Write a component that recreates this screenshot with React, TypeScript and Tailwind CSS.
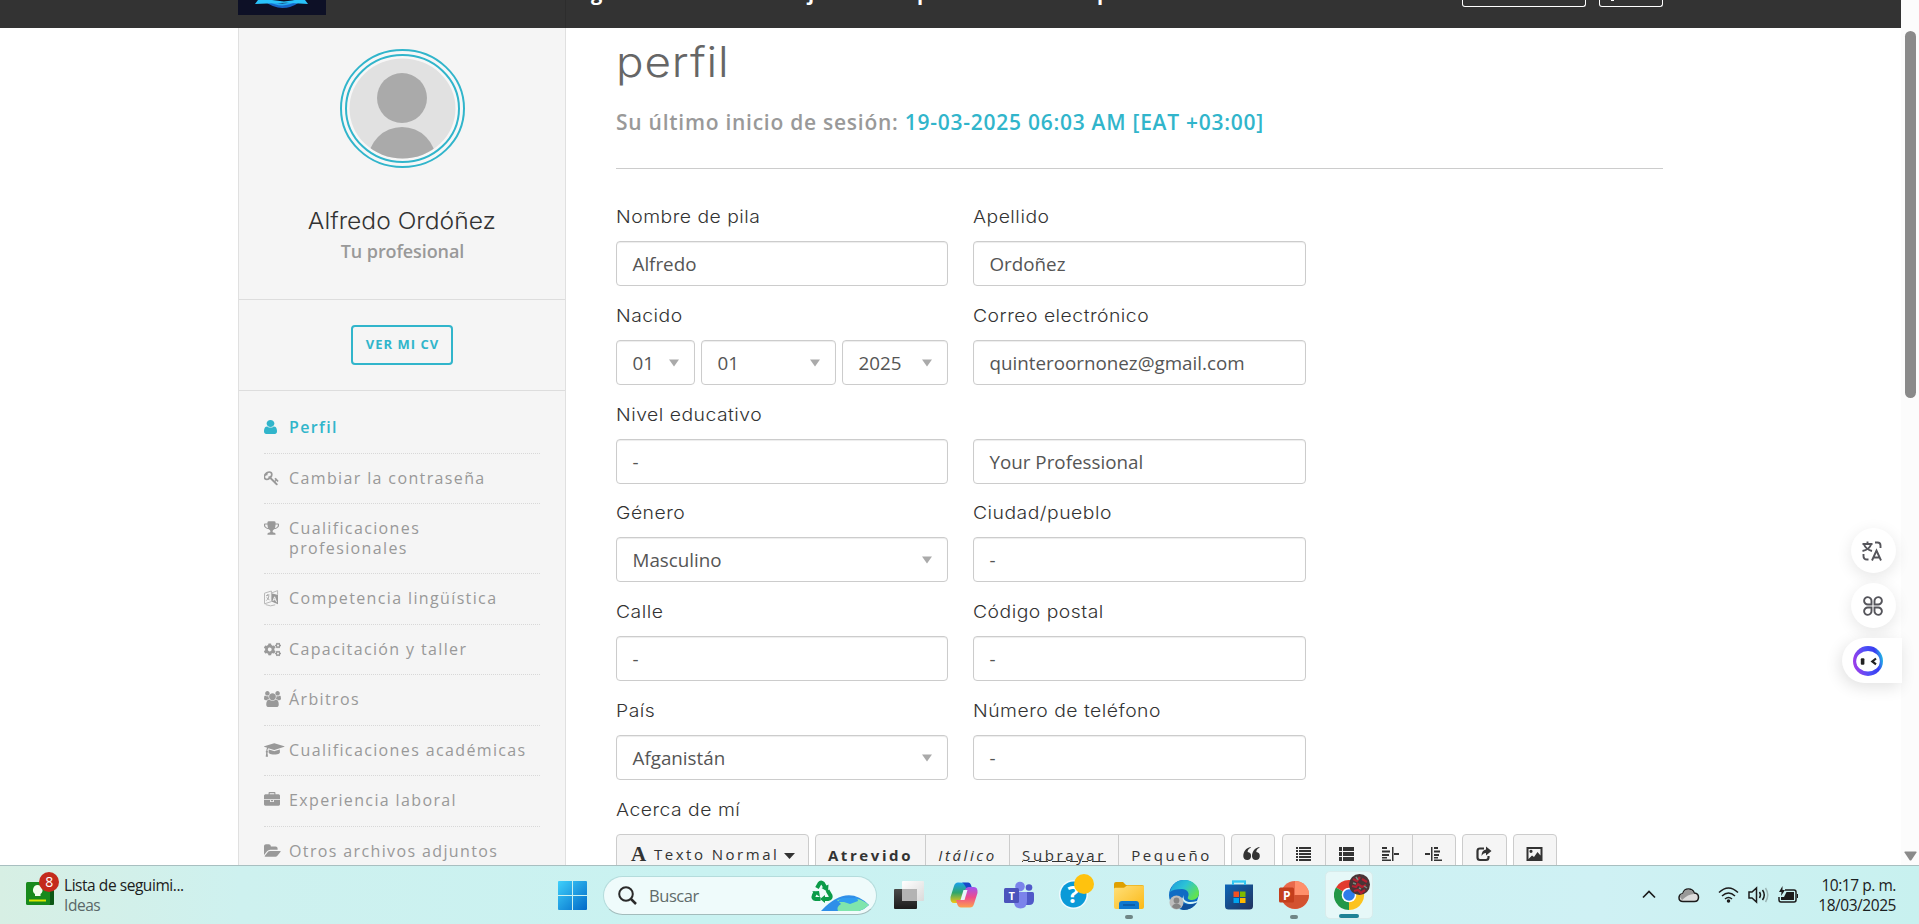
import React from "react";
import { FaCogs } from "react-icons/fa";

type Glyph = { box: string; w: number; h?: number; d: string };

const glyphs: Record<string, Glyph> = {
  user: {
    box: "256 128 1280 1536",
    w: 13,
    h: 14,
    d: "M1536 1399q0 109-62.5 187t-150.5 78h-854q-88 0-150.5-78t-62.5-187q0-85 8.5-160.5t31.5-152 58.5-131 94-89 134.5-34.5q131 128 313 128t313-128q76 0 134.5 34.5t94 89 58.5 131 31.5 152 8.5 160.5zm-256-887q0 159-112.5 271.5t-271.5 112.5-271.5-112.5-112.5-271.5 112.5-271.5 271.5-112.5 271.5 112.5 112.5 271.5z",
  },
  key: {
    box: "64 0 1664 1792",
    w: 15,
    d: "M832 512q0-80-56-136t-136-56-136 56-56 136q0 42 19 83-41-19-83-19-80 0-136 56t-56 136 56 136 136 56 136-56 56-136q0-42-19-83 41 19 83 19 80 0 136-56t56-136zm851 704q0 17-49 66t-66 49q-9 0-28.5-16t-36.5-33-38.5-40-24.5-26l-96 96 220 220q28 28 28 68 0 42-39 81t-81 39q-40 0-68-28l-671-671q-176 131-365 131-163 0-265.5-102.5t-102.5-265.5q0-160 95-313t248-248 313-95q163 0 265.5 102.5t102.5 265.5q0 189-131 365l355 355 96-96q-3-3-26-24.5t-40-38.5-33-36.5-16-28.5q0-17 49-66t66-49q13 0 23 10 6 6 46 44.5t82 79.5 86.5 86 73 78 28.5 41z",
  },
  trophy: {
    box: "64 0 1664 1792",
    w: 15,
    d: "M522 883q-74-162-74-371h-256v96q0 78 94.5 162t235.5 113zm1078-275v-96h-256q0 209-74 371 141-29 235.5-113t94.5-162zm128-128v128q0 71-41.5 143t-112 130-173 97.5-215.5 44.5q-42 54-95 95-38 34-52.5 72.5t-14.5 89.5q0 54 30.5 91t97.5 37q75 0 133.5 45.5t58.5 114.5v64q0 14-9 23t-23 9h-832q-14 0-23-9t-9-23v-64q0-69 58.5-114.5t133.5-45.5q67 0 97.5-37t30.5-91q0-51-14.5-89.5t-52.5-72.5q-53-41-95-95-113-5-215.5-44.5t-173-97.5-112-130-41.5-143v-128q0-40 28-68t68-28h288v-96q0-66 47-113t113-47h576q66 0 113 47t47 113v96h288q40 0 68 28t28 68z",
  },
  users: {
    box: "0 0 1920 1792",
    w: 17,
    d: "M593 896q-162 5-265 128h-134q-82 0-138-40.5t-56-118.5q0-353 124-353 6 0 43.5 21t97.5 42.5 119 21.5q67 0 133-23-5 37-5 66 0 139 81 256zm1071 637q0 120-73 189.5t-194 69.5h-874q-121 0-194-69.5t-73-189.5q0-53 3.5-103.5t14-109 26.5-108.5 43-97.5 62-81 85.5-53.5 111.5-20q10 0 43 21.5t73 48 107 48 135 21.5 135-21.5 107-48 73-48 43-21.5q61 0 111.5 20t85.5 53.5 62 81 43 97.5 26.5 108.5 14 109 3.5 103.5zm-1024-1277q0 106-75 181t-181 75-181-75-75-181 75-181 181-75 181 75 75 181zm704 384q0 159-112.5 271.5t-271.5 112.5-271.5-112.5-112.5-271.5 112.5-271.5 271.5-112.5 271.5 112.5 112.5 271.5zm576 225q0 78-56 118.5t-138 40.5h-134q-103-123-265-128 81-117 81-256 0-29-5-66 66 23 133 23 59 0 119-21.5t97.5-42.5 43.5-21q124 0 124 353zm-128-609q0 106-75 181t-181 75-181-75-75-181 75-181 181-75 181 75 75 181z",
  },
  cap: {
    box: "0 0 2304 1792",
    w: 20.5,
    d: "M1774 836l18 316q4 69-82 128t-235 93.5-323 34.5-323-34.5-235-93.5-82-128l18-316 574 181q22 7 48 7t48-7zm530-324q0 23-22 31l-1120 352q-4 1-10 1t-10-1l-652-206q-43 34-71 111.5t-34 178.5q63 36 63 109 0 69-58 107l58 433q2 14-8 25-9 11-24 11h-192q-15 0-24-11-10-11-8-25l58-433q-58-38-58-107 0-73 65-111 11-207 98-330l-333-104q-22-8-22-31t22-31l1120-352q4-1 10-1t10 1l1120 352q22 8 22 31z",
  },
  briefcase: {
    box: "0 0 1792 1792",
    w: 16,
    d: "M640 256h512v-128h-512v128zm1152 640v480q0 66-47 113t-113 47h-1472q-66 0-113-47t-47-113v-480h672v160q0 26 19 45t45 19h320q26 0 45-19t19-45v-160h672zm-768 0v128h-256v-128h256zm768-480v384h-1792v-384q0-66 47-113t113-47h352v-160q0-40 28-68t68-28h576q40 0 68 28t28 68v160h352q66 0 113 47t47 113z",
  },
  folder: {
    box: "0 0 1920 1792",
    w: 17,
    d: "M1879 952q0 31-31 66l-336 396q-43 51-120.5 86.5t-143.5 35.5h-1088q-34 0-60.5-13t-26.5-43q0-31 31-66l336-396q43-51 120.5-86.5t143.5-35.5h1088q34 0 60.5 13t26.5 43zm-343-344v160h-832q-94 0-197 47.5t-164 119.5l-337 396-5 6q0-4-.5-12.5t-.5-12.5v-960q0-92 66-158t158-66h320q92 0 158 66t66 158v32h544q92 0 158 66t66 158z",
  },
};

function MenuIcon({ name }: { name: string }) {
  if (name === "cogs") return <FaCogs size={17} />;
  if (name === "language")
    return (
      <svg width="15" height="17" viewBox="0 0 15 17" fill="none">
        <path d="M7.4 3.2 14 5v9.2L7.4 11.4z" fill="currentColor" />
        <path d="M.5 3.2 7.4 1v10.6L.5 13.8zM7.4 3 13.6.6v4.2M1.6 14.6q5 2.4 9.6.2" stroke="#b9b9b9" />
        <path d="M2 5.8l3.4-1M3.8 4v1.4M2.3 10.6c1.6-1.3 2.4-3 2.6-5M2.8 7.4c.8 1.3 1.5 2 2.7 2.4" stroke="currentColor" strokeWidth=".8" />
        <path d="M9 11 10.6 6.8 12.6 12.2M9.6 9.4l2.4.8" stroke="#f5f5f5" strokeWidth=".9" />
      </svg>
    );
  const g = glyphs[name];
  return (
    <svg width={g.w} height={g.h ?? 16} viewBox={g.box} preserveAspectRatio="none" fill="currentColor">
      <path d={g.d} />
    </svg>
  );
}

const menu = [
  { icon: "user", label: "Perfil", row: "h-[51px] text-[#31b5cb] font-semibold" },
  { icon: "key", label: "Cambiar la contraseña", row: "h-[50px]" },
  { icon: "trophy", label: "Cualificaciones profesionales", row: "h-[70px]" },
  { icon: "language", label: "Competencia lingüística", row: "h-[51px]" },
  { icon: "cogs", label: "Capacitación y taller", row: "h-[50px]" },
  { icon: "users", label: "Árbitros", row: "h-[51px]" },
  { icon: "cap", label: "Cualificaciones académicas", row: "h-[50px]" },
  { icon: "briefcase", label: "Experiencia laboral", row: "h-[51px]" },
  { icon: "folder", label: "Otros archivos adjuntos", row: "h-[51px]" },
];

function Header() {
  return (
    <header className="relative flex h-7 w-[1902px] shrink-0 overflow-hidden bg-[#333] pl-[238px]">
      <svg width="88" height="15" viewBox="0 0 88 15" className="shrink-0">
        <rect width="88" height="15" fill="#0d1026" />
        <path d="M28 0q16 12 33 0" fill="none" stroke="#1767c9" strokeWidth="4" />
        <path d="M30 0q14 9 29 0" fill="none" stroke="#25a8f2" strokeWidth="2" />
        <path d="M20 0H34L46 1.5 58 0H67L70 4 48 2.8 17 4z" fill="#29c3fb" />
      </svg>
      <div className="relative ml-[239px] w-px bg-[#2d2d2d]">
        <span className="absolute left-[26px] -top-[17px] text-[20px] leading-5 font-bold text-white">g</span>
        <span className="absolute left-[243px] -top-[17px] text-[20px] leading-5 font-bold text-white">j</span>
        <span className="absolute left-[352px] -top-[17px] text-[20px] leading-5 font-bold text-white">p</span>
        <span className="absolute left-[532px] -top-[17px] text-[20px] leading-5 font-bold text-white">p</span>
      </div>
      <div className="ml-[896px] h-[7px] w-[124px] rounded-b-[3px] border border-t-0 border-white" />
      <div className="ml-[13px] h-[7px] w-[64px] rounded-b-[3px] border border-t-0 border-white pl-[11px]">
        <div className="h-px w-[3px] bg-white" />
      </div>
    </header>
  );
}

function Sidebar() {
  return (
    <aside className="ml-[238px] flex w-[328px] shrink-0 flex-col border-x border-[#e0e0e0] bg-[#f5f5f5]">
      <div className="flex h-[272px] shrink-0 flex-col items-center border-b border-[#ddd] pt-[21px]">
        <svg width="126" height="120" viewBox="-0.5 0 126 120">
          <defs>
            <clipPath id="face">
              <ellipse cx="63" cy="59.5" rx="53" ry="50" />
            </clipPath>
          </defs>
          <ellipse cx="63" cy="59.5" rx="61.5" ry="58.5" fill="#f7f7f7" stroke="#31b5cb" strokeWidth="2" />
          <ellipse cx="63" cy="59.5" rx="56.5" ry="53.5" fill="#f7f7f7" stroke="#31b5cb" strokeWidth="2" />
          <g clipPath="url(#face)">
            <rect width="126" height="120" fill="#e1e1e1" />
            <circle cx="62.500" cy="49" r="25" fill="#aaa" />
            <ellipse cx="62.500" cy="112" rx="34" ry="34" fill="#aaa" />
          </g>
        </svg>
        <h2 className="mt-[36px] scale-x-[1.07] font-[Inter,sans-serif] text-[23px] leading-8 font-light text-[#333]">Alfredo Ordóñez</h2>
        <p className="mt-[2px] ml-px text-[18px] leading-6 font-semibold tracking-[-0.1px] text-[#999]">Tu profesional</p>
      </div>
      <div className="flex h-[91px] shrink-0 items-center justify-center border-b border-[#ddd]">
        <button className="h-10 w-[102px] rounded-[4px] border-2 border-[#31b5cb] pl-px text-[13px] font-bold tracking-[1px] text-[#31b5cb]">VER MI CV</button>
      </div>
      <nav className="shrink-0 px-[25px] pt-3 text-[16px] leading-5 tracking-[1.37px] text-[#999]">
        {menu.map((m) => (
          <a key={m.label} className={`flex border-b border-dotted border-[#d8d8d8] pt-[14px] ${m.row}`}>
            <span className="flex h-5 w-[25px] shrink-0 items-center">
              <MenuIcon name={m.icon} />
            </span>
            <span className="w-[251px] shrink-0">{m.label}</span>
          </a>
        ))}
      </nav>
    </aside>
  );
}

const boxClass =
  "flex h-[45px] items-center justify-between rounded-[4px] border border-[#ccc] bg-white pl-[15.500px] pr-[14px] pt-px text-[18.8px] tracking-normal text-[#555] shadow-[inset_0_1px_1px_rgba(0,0,0,0.075)]";

function Box({ value, select, width = "w-full" }: { value: string; select?: boolean; width?: string }) {
  return (
    <div className={`${boxClass} ${width}`}>
      <span>{value}</span>
      {select && (
        <svg width="12" height="8" viewBox="0 0 12 8">
          <path d="M1 .5h10L6 7.5z" fill="#aaa" />
        </svg>
      )}
    </div>
  );
}

function Field({ label, children }: { label: string; children: React.ReactNode }) {
  return (
    <div className="h-[98.8px]">
      <div className="h-9 font-[Inter,sans-serif] text-[17.5px] leading-6 font-light tracking-[0.45px] text-[#333]">
        <span className="inline-block origin-left scale-x-[1.105]">{label}</span>
      </div>
      {children}
    </div>
  );
}

const cell = "flex items-center justify-center border-r border-[#ccc] last:border-r-0";
const group = "flex h-[46px] rounded-[4px] border border-[#ccc] bg-[#f5f5f5] pb-[5px]";

function ToolIcon({ name }: { name: string }) {
  return (
    <svg width="17" height="16" viewBox="0 0 17 16" fill="#333">
      {name === "quote" && (
        <path d="M7.6 1C3 2 .3 5.500.3 10.200a3.900 3.900 0 1 0 4.300-4.100C4.600 4.200 5.600 2.700 7.800 1.700zM16.300 1C11.700 2 9 5.500 9 10.200a3.900 3.900 0 1 0 4.300-4.100c0-1.900 1-3.400 3.200-4.400z" />
      )}
      {name === "ul" && <path d="M1 1h2v2H1zM4 1h12v2H4zM1 4h2v2H1zM4 4h12v2H4zM1 7h2v2H1zM4 7h12v2H4zM1 10h2v2H1zM4 10h12v2H4zM1 13h2v2H1zM4 13h12v2H4z" />}
      {name === "ol" && <path d="M1 1h3v4H1zM5 1h11v4H5zM1 6h3v4H1zM5 6h11v4H5zM1 11h3v4H1zM5 11h11v4H5z" />}
      {name === "outdent" && <path d="M0 1h5v2H0zM0 4.500h8v2H0zM0 8h7v2H0zM0 11h5v1.500H0zM0 13.500h9V15H0zM10 1h1.500v14H10zM12 7h5v2h-5z" />}
      {name === "indent" && <path d="M6 1h1.500v14H6zM0 7h5v2H0zM9 1h4v2H9zM9 4.500h6v2H9zM9 8h5v2H9zM9 11h4v1.500H9zM9 13.500h8V15H9z" />}
      {name === "share" && (
        <>
          <path d="M9 2.500H5Q2.500 2.500 2.500 5v6.500Q2.500 14 5 14h6q2.500 0 2.500-2.500V10" fill="none" stroke="#333" strokeWidth="2.200" />
          <path d="M11 .5 16.500 5 11 9.500V7Q8 7 6.500 10 6.500 4 11 3.400z" />
        </>
      )}
      {name === "image" && <path fillRule="evenodd" d="M.5 1h16v14H.5zM2.500 3v10l3.500-3.500 2 1.500 3.500-5 3 3.500V3zM5 3.700a1.600 1.600 0 1 1 0 3.200 1.600 1.600 0 0 1 0-3.200z" />}
    </svg>
  );
}

function Toolbar() {
  return (
    <div className="flex text-[15px] tracking-[2.6px] text-[#333]">
      <div className={`${group} w-[193px] items-center pl-[14px]`}>
        <span className="w-[23px] font-['Liberation_Serif',serif] text-[21px] leading-5 font-bold tracking-normal">A</span>
        <span className="-mt-px tracking-[2.500px]">Texto Normal</span>
        <svg width="11" height="6" viewBox="0 0 11 6" className="mt-1 ml-[5px]">
          <path d="M0 0h11L5.500 6z" fill="#333" />
        </svg>
      </div>
      <div className={`${group} ml-[6px] w-[410px] pb-0`}>
        <span className={`${cell} w-[110px] pt-px font-bold`}>Atrevido</span>
        <span className={`${cell} w-[84px] pt-px italic`}>Itálico</span>
        <span className={`${cell} w-[109px] pt-px underline decoration-1 underline-offset-0`}>Subrayar</span>
        <span className={`${cell} flex-1 pt-px`}>Pequeño</span>
      </div>
      <div className={`${group} ml-[6px] w-11`}>
        <span className={`${cell} -ml-1 flex-1`}><ToolIcon name="quote" /></span>
      </div>
      <div className={`${group} ml-[7px] w-[174px]`}>
        {["ul", "ol", "outdent", "indent"].map((n) => (
          <span key={n} className={`${cell} -mb-[5px] flex-1 pr-px pb-[5px]`}><ToolIcon name={n} /></span>
        ))}
      </div>
      <div className={`${group} ml-[6px] w-[45px]`}>
        <span className={`${cell} flex-1 pr-[3px]`}><ToolIcon name="share" /></span>
      </div>
      <div className={`${group} ml-[6px] w-11`}>
        <span className={`${cell} flex-1 pr-[2px]`}><ToolIcon name="image" /></span>
      </div>
    </div>
  );
}

function Profile() {
  return (
    <section className="ml-[50px] w-[1047px] shrink-0">
      <h1 className="mt-[7px] h-[54px] w-[120px] origin-left scale-x-[1.09] font-[Inter,sans-serif] text-[42px] leading-[54px] font-light tracking-[0.8px] text-[#666]">perfil</h1>
      <p className="mt-[19px] h-[61px] border-b border-[#ccc] text-[21px] leading-7 font-semibold tracking-[0.740px] text-[#999]">
        Su último inicio de sesión: <span className="text-[#31b5cb]">19-03-2025 06:03 AM [EAT +03:00]</span>
      </p>
      <div className="mt-9 grid w-[690px] grid-cols-[332px_333px] gap-x-[25px]">
        <Field label="Nombre de pila"><Box value="Alfredo" /></Field>
        <Field label="Apellido"><Box value="Ordoñez" /></Field>
        <Field label="Nacido">
          <div className="flex gap-[6px]">
            <Box value="01" select width="w-[79px]" />
            <Box value="01" select width="w-[135px]" />
            <Box value="2025" select width="w-[106px]" />
          </div>
        </Field>
        <Field label="Correo electrónico"><Box value="quinteroornonez@gmail.com" /></Field>
        <Field label="Nivel educativo"><Box value="-" /></Field>
        <Field label=""><Box value="Your Professional" /></Field>
        <Field label="Género"><Box value="Masculino" select /></Field>
        <Field label="Ciudad/pueblo"><Box value="-" /></Field>
        <Field label="Calle"><Box value="-" /></Field>
        <Field label="Código postal"><Box value="-" /></Field>
        <Field label="País"><Box value="Afganistán" select /></Field>
        <Field label="Número de teléfono"><Box value="-" /></Field>
      </div>
      <Field label="Acerca de mí"><Toolbar /></Field>
    </section>
  );
}

function FloatingTools() {
  return (
    <div className="absolute top-[528px] right-[17px] flex w-[60px] flex-col items-end gap-[10px]">
      <div className="mr-[6px] flex size-[45px] items-center justify-center rounded-full bg-white shadow-[0_4px_16px_rgba(0,0,0,0.1)]">
        <svg width="20" height="20" viewBox="0 0 20 20" fill="none" stroke="#55555b" strokeWidth="1.900" className="mr-1">
          <path d="M.5 3h10M5.500.5V3M2 3.500q2 5 8 6.500M9 3.500q-1.500 5-8.500 6.500M13 1.500h2.500q3 0 3 3V7M1.500 13v2q0 3.500 3.500 3.500h1.500M10 19.500 14.500 9.500 19 19.500M11.500 16.500h6" />
        </svg>
      </div>
      <div className="mr-[6px] flex size-[45px] items-center justify-center rounded-full bg-white shadow-[0_4px_16px_rgba(0,0,0,0.1)]">
        <svg width="20" height="20" viewBox="0 0 20 20" fill="none" stroke="#55555b" strokeWidth="1.900" className="mr-px">
          <path d="M8.500 8.500H5A3.700 3.700 0 1 1 8.500 5zM11.500 8.500V5A3.700 3.700 0 1 1 15 8.500zM8.500 11.500V15A3.700 3.700 0 1 1 5 11.500zM11.500 11.500H15A3.700 3.700 0 1 1 11.500 15z" />
        </svg>
      </div>
      <div className="flex h-[45px] w-[60px] items-center rounded-l-full bg-white pl-[11px] shadow-[-2px_4px_16px_rgba(0,0,0,0.12)]">
        <svg width="30" height="30" viewBox="0 0 30 30">
          <defs>
            <linearGradient id="bot" x1="0" y1=".7" x2="1" y2=".5">
              <stop offset="0" stopColor="#a43be8" />
              <stop offset=".5" stopColor="#4b50f8" />
              <stop offset=".8" stopColor="#3a3cf0" />
              <stop offset="1" stopColor="#22b4e6" />
            </linearGradient>
          </defs>
          <circle cx="15" cy="15" r="15" fill="url(#bot)" />
          <ellipse cx="15" cy="15.300" rx="11.800" ry="10.300" fill="#fff" />
          <rect x="7.800" y="12.300" width="3.600" height="6.500" rx="1" fill="#222" />
          <path d="M23 12.500 19.300 15.500 23 18.300" fill="none" stroke="#222" strokeWidth="2.200" />
        </svg>
      </div>
    </div>
  );
}

function Scrollbar() {
  return (
    <div className="absolute top-0 right-0 flex h-[865px] w-[18px] flex-col items-center justify-between bg-[#fcfcfc] pt-[31px] pb-[4px]">
      <div className="h-[367px] w-[11px] rounded-full bg-[#8a8a8a]" />
      <svg width="13" height="10" viewBox="0 0 13 10">
        <path d="M1 .5h11q1 0 .5 1L7.500 9q-1 1.200-2 0L.5 1.500Q0 .5 1 .5z" fill="#8a8a8a" />
      </svg>
    </div>
  );
}

function AppSlot({ dot, children }: { dot?: string; children: React.ReactNode }) {
  return (
    <div className="relative flex h-12 w-[55px] shrink-0 items-center justify-center">
      {children}
      {dot && <div className={`absolute bottom-0 h-1 rounded-full ${dot}`} />}
    </div>
  );
}

function TaskApps() {
  return (
    <div className="ml-[4px] flex h-12">
      <AppSlot>
        <svg width="30" height="30" viewBox="0 0 30 30">
          <defs>
            <linearGradient id="dk" x1="0" y1="0" x2="0" y2="1"><stop stopColor="#4a4a4a" /><stop offset="1" stopColor="#1c1c1c" /></linearGradient>
            <linearGradient id="lt" x1="0" y1="0" x2="1" y2="1"><stop stopColor="#fff" /><stop offset="1" stopColor="#dadada" /></linearGradient>
          </defs>
          <rect x="0" y="9" width="23" height="20" rx="1" fill="url(#dk)" />
          <rect x="8" y="1" width="22" height="20" rx="1" fill="url(#lt)" />
          <rect x="8" y="9" width="15" height="12" fill="#b3b3b3" />
        </svg>
      </AppSlot>
      <AppSlot>
        <svg width="30" height="28" viewBox="0 0 30 28">
          <defs>
            <linearGradient id="cp1" x1="0" y1="0" x2="0" y2="1"><stop stopColor="#1aa0ee" /><stop offset=".5" stopColor="#2fa66b" /><stop offset="1" stopColor="#f5c510" /></linearGradient>
            <linearGradient id="cp2" x1="0" y1="0" x2="0" y2="1"><stop stopColor="#a153f0" /><stop offset=".5" stopColor="#ee4d8c" /><stop offset="1" stopColor="#fda04d" /></linearGradient>
          </defs>
          <path d="M18 2q3 0 4 4l1 3h-5L14 19q-1 3-4 3H5Q1 22 1.500 16L5 5q1-3.500 4-3.500z" fill="url(#cp1)" />
          <path d="M13 1.500h6q2.500 0 3.500 4L24 9h-6q-2-6-5-7.500z" fill="#1748c9" />
          <path d="M12 26.500q-3 0-4-4L7 19h5l4-10q1-3 4-3h5q4 0 3.500 6L25 23q-1 3.500-4 3.500z" fill="url(#cp2)" />
          <path d="m14.500 9h4l-3 10h-4z" fill="#e8f6f8" />
        </svg>
      </AppSlot>
      <AppSlot>
        <svg width="30" height="28" viewBox="0 0 30 28">
          <circle cx="16" cy="5.500" r="4.800" fill="#7b83eb" />
          <circle cx="25" cy="6.500" r="3.300" fill="#5059c9" />
          <path d="M20 11h8.500q1.500 0 1.500 1.500V19q0 5-5 5h-5z" fill="#5059c9" />
          <path d="M10 11h13v9q0 7.500-6.500 7.500T10 20z" fill="#7b83eb" />
          <rect y="7" width="15" height="15" rx="1.500" fill="#4b53bc" />
          <text x="7.500" y="18.500" textAnchor="middle" fontSize="11" fontWeight="700" fill="#fff">T</text>
        </svg>
      </AppSlot>
      <AppSlot>
        <svg width="35" height="37" viewBox="0 0 35 37" className="-mt-[7px] ml-[5px] shrink-0">
          <circle cx="14.500" cy="21.500" r="14.500" fill="#eefafd" />
          <circle cx="14.500" cy="21.500" r="13" fill="#0a9ad8" />
          <text x="14" y="30" textAnchor="middle" fontSize="24" fontWeight="700" fill="#fff">?</text>
          <circle cx="25" cy="11" r="10" fill="#ffc20e" />
        </svg>
      </AppSlot>
      <AppSlot dot="w-2 bg-[#6f8686]">
        <svg width="30" height="27" viewBox="0 0 30 27">
          <defs><linearGradient id="fo" x1="0" y1="0" x2="1" y2="1"><stop stopColor="#ffe07a" /><stop offset="1" stopColor="#fbb917" /></linearGradient></defs>
          <path d="M0 2Q0 0 2 0h7l3 3h16q2 0 2 2v6H0z" fill="#dfa000" />
          <path d="M0 7q0-1.200 1.500-1.200H10L13 3.500h16q1 0 1 1.500v20q0 2-2 2H2q-2 0-2-2z" fill="url(#fo)" />
          <path d="M5 27v-5q0-3 3-3h14q3 0 3 3v5z" fill="#0f78cf" />
          <path d="M9 23h12" stroke="#0a4d91" strokeWidth="1.200" />
        </svg>
      </AppSlot>
      <AppSlot>
        <svg width="30" height="30" viewBox="0 0 30 30">
          <defs>
            <linearGradient id="ed" x1="0" y1="0" x2="1" y2=".6"><stop stopColor="#1b98dd" /><stop offset=".5" stopColor="#2cc3d6" /><stop offset="1" stopColor="#62e34f" /></linearGradient>
          </defs>
          <circle cx="15" cy="15" r="15" fill="#0f6cc4" />
          <path d="M1 12C3 4 8 0 15 0c9 0 15 6 15 13 0 4-3 7-7 7-3 0-5-1-4-3 2-4-1-8-6-8-6 0-10 1-12 3z" fill="url(#ed)" />
          <path d="M15 15c-2 5 3 9 13 6l2-6v6l-3 2c-5 2-13 1-14-4z" fill="#d4f3f5" />
          <path d="M28 22.500C25 27 20 30 15 30c-4 0-4-3-4-8 4 3 11 3.500 17 .500z" fill="#10509b" />
          <circle cx="7.500" cy="22.500" r="7" fill="#bdbdbd" />
          <circle cx="7.500" cy="20.500" r="2.900" fill="#858585" />
          <path d="M3 27q1-3.500 4.500-3.500T12 27q-4.500 4-9 0z" fill="#858585" />
        </svg>
      </AppSlot>
      <AppSlot>
        <svg width="30" height="30" viewBox="0 0 30 30">
          <defs><linearGradient id="st" x1="0" y1="0" x2="1" y2="1"><stop stopColor="#0d66b8" /><stop offset="1" stopColor="#22325c" /></linearGradient></defs>
          <path d="M9 6V1.500h12V6" fill="none" stroke="#21bdf0" strokeWidth="2" />
          <path d="M1 4.500h28V26q0 3.500-3.500 3.500h-21Q1 29.500 1 26z" fill="url(#st)" />
          <path d="M9 5V1.500h12V5" fill="none" stroke="#35c9f5" strokeWidth="1.500" />
          <path d="M9.500 11.500H15V17H9.500z" fill="#f25022" /><path d="M16 11.500h5.500V17H16z" fill="#7fba00" />
          <path d="M9.500 18H15v5H9.500z" fill="#00a4ef" /><path d="M16 18h5.500v5H16z" fill="#ffb900" />
        </svg>
      </AppSlot>
      <AppSlot dot="w-2 bg-[#6f8686]">
        <svg width="30" height="28" viewBox="0 0 30 28">
          <circle cx="16" cy="14" r="14" fill="#e9694b" />
          <path d="M16 0a14 14 0 0 1 14 14H16z" fill="#ff8f6b" />
          <path d="M30 14a14 14 0 0 1-27 5L16 14z" fill="#d35230" />
          <rect y="6.500" width="15" height="15" rx="1.500" fill="#c43e1c" />
          <text x="7.500" y="18.500" textAnchor="middle" fontSize="12" fontWeight="700" fill="#fff">P</text>
        </svg>
      </AppSlot>
      <div className="relative ml-[4px] flex size-12 items-center justify-center rounded-[5px] border border-[#d8ecec] bg-[#e6f8f8]">
        <svg width="36" height="36" viewBox="0 0 36 36" className="-mt-[6px] ml-[5px]">
          <path d="M15 21 2 13.500A15 15 0 0 1 28 13.500z" fill="#e33b2e" />
          <path d="M15 21 28 13.500A15 15 0 0 1 15 36z" fill="#fcc31e" />
          <path d="M15 21V36A15 15 0 0 1 2 13.500z" fill="#229847" />
          <path d="m15 36 6.500-11.300L17 22z" fill="#fcc31e" />
          <circle cx="15" cy="21" r="7.300" fill="#fff" />
          <circle cx="15" cy="21" r="5.800" fill="#2d7bea" />
          <circle cx="25.500" cy="10.500" r="10.500" fill="#4a3436" />
          <path d="m19 5 4 2 3-4M28 5l5 3M18 12l4 1 2-3 4 3 4-2M20 17l4-1 3 3 4-3" fill="none" stroke="#b41f30" strokeWidth="2.200" />
          <path d="m22 3 2 3M30 12l3 2M19 9l3 1M25 14l2 1" stroke="#7d8a80" strokeWidth="1.500" />
        </svg>
        <div className="absolute bottom-0 h-1 w-5 rounded-full bg-[#1f8296]" />
      </div>
    </div>
  );
}

function Taskbar() {
  return (
    <footer className="flex h-[59px] w-full items-center border-t border-[#a8bfc0] bg-[linear-gradient(90deg,#d7efe4_0,#ceF1ef_240px,#c9f2f1_700px,#cff1f4_1600px,#c8f1ef_100%)] text-[15.500px] tracking-[-0.450px] text-[#1b2020]">
      <div className="relative ml-[26px] w-[38px] shrink-0 self-start pt-[16px]">
        <svg width="28" height="24" viewBox="0 0 28 24">
          <rect x="20" y="2" width="8" height="21" rx="1" fill="#0c5714" />
          <rect width="24" height="23" rx="1.500" fill="#188a1d" />
          <path d="M11.500 3a5 5 0 0 0-2.500 9v2h5.500v-2a5 5 0 0 0-3-9z" fill="#f4fff0" />
          <rect x="3" y="17.500" width="17" height="2" fill="#d8e600" />
        </svg>
        <span className="absolute top-[6px] left-[13px] flex size-5 items-center justify-center rounded-full bg-[#c42b1c] text-[14px] leading-5 text-white">8</span>
      </div>
      <div className="-mt-px w-[494px] leading-5">
        <div>Lista de seguimi...</div>
        <div className="text-[#5a6868]">Ideas</div>
      </div>
      <svg width="29" height="29" viewBox="0 0 29 29" className="mt-px shrink-0">
        <defs><linearGradient id="win" x1="0" y1="0" x2="1" y2="1"><stop stopColor="#3fd0fb" /><stop offset="1" stopColor="#0069c8" /></linearGradient></defs>
        <path d="M1 0h13v14H0V1q0-1 1-1zM15 0h13q1 0 1 1v13H15zM0 15h14v14H1q-1 0-1-1zM15 15h14v13q0 1-1 1H15z" fill="url(#win)" />
      </svg>
      <div className="mt-px ml-4 flex h-[39px] w-[274px] shrink-0 items-center rounded-full border border-[#b4dcdc] border-b-[#a3bcbc] bg-[#effbfb] pl-[14px]">
        <svg width="19" height="19" viewBox="0 0 19 19" fill="none" stroke="#2a2a2a" strokeWidth="2">
          <circle cx="8" cy="8" r="6.800" /><path d="m13 13 5 5" strokeWidth="2.500" />
        </svg>
        <span className="ml-[12px] w-[162px] pt-px text-[16.500px]">
          <span className="text-[#5f6a6a]">Buscar</span>
        </span>
        <svg width="60" height="32" viewBox="0 0 60 32" className="-mb-px">
          <path d="M10 31q26-28 48-6-4 4-10 6z" fill="#2f8fe8" />
          <path d="M27 31q-2-4 3-7l-4-4 14-2q10 0 18 7-4 4-10 6z" fill="#7fe5ac" />
          <path d="m26 22 5-4h12l3-1 1 4-8 3-6-2z" fill="#2f9cf0" />
          <g fill="none" stroke="#0b9b48" strokeWidth="4">
            <path d="m6 8 2.500-4.500q1.500-2 3.500 0l2 3.500" />
            <path d="m16.500 10.500 3 5q1 3-2.500 3.500h-4" />
            <path d="M9.500 19H4.500q-3-.5-1.500-4l1.500-3" />
          </g>
          <path d="m10.500 8 7-3.500-.5 7.500zM14 15v8l-5-4zM1 11.500l7-.5 1 6z" fill="#0b9b48" />
        </svg>
      </div>
      <TaskApps />
      <div className="ml-auto flex items-center pr-[23px]">
        <svg width="156" height="20" viewBox="0 0 156 20" fill="none" stroke="#1b1b1b" strokeWidth="1.500" className="mr-[20px]">
          <path d="m1 12.500 6-6 6 6" strokeWidth="1.700" />
          <path d="M41 16.500q-4 0-4-3.700 0-3.500 3.800-4Q42 4 46.500 4q4.500 0 5.700 4 4.300.3 4.300 4.200 0 4.300-4.200 4.300z" fill="#ddd" />
          <path d="M38 12q0-3 3-3.200Q42 4.500 46.500 4.500 51 5 52 9q-6 0-12 6z" fill="#999" stroke="none" />
          <g transform="translate(76 1)"><path d="M1 6.500q9.500-9 19 0M4 10q6.500-6 13 0M7 13q3.500-3 7 0" /><circle cx="10.500" cy="15" r="1" fill="#1b1b1b" /></g>
          <g transform="translate(106 2)"><path d="M1 5h3l4.500-4v14L4 11H1zM11.500 5q2 3 0 6M14.500 3q3.500 5 0 10" /><path d="M17.500 1q4.500 7 0 14" stroke="#9bb5b5" /></g>
          <g transform="translate(136 1)"><path d="M7 4h9q2 0 2 2v8q0 2-2 2H3q-2 0-2-2v-3" /><path d="M8.500 6H16v8H3v-3h3zM19 8h1.500v4H19zM4.500 0 1 6h2.500L3 10l4-6H4.500z" fill="#1b1b1b" stroke="none" /></g>
        </svg>
        <div className="-mt-px text-right leading-5 whitespace-nowrap">
          <div>10:17 p. m.</div>
          <div>18/03/2025</div>
        </div>
      </div>
    </footer>
  );
}

export default function App() {
  return (
    <div className="h-[924px] w-[1919px] overflow-hidden bg-white font-['Open_Sans',sans-serif]">
      <div className="relative flex h-[865px] flex-col overflow-hidden">
        <Header />
        <div className="flex min-h-0 flex-1">
          <Sidebar />
          <Profile />
        </div>
        <Scrollbar />
        <FloatingTools />
      </div>
      <Taskbar />
    </div>
  );
}
